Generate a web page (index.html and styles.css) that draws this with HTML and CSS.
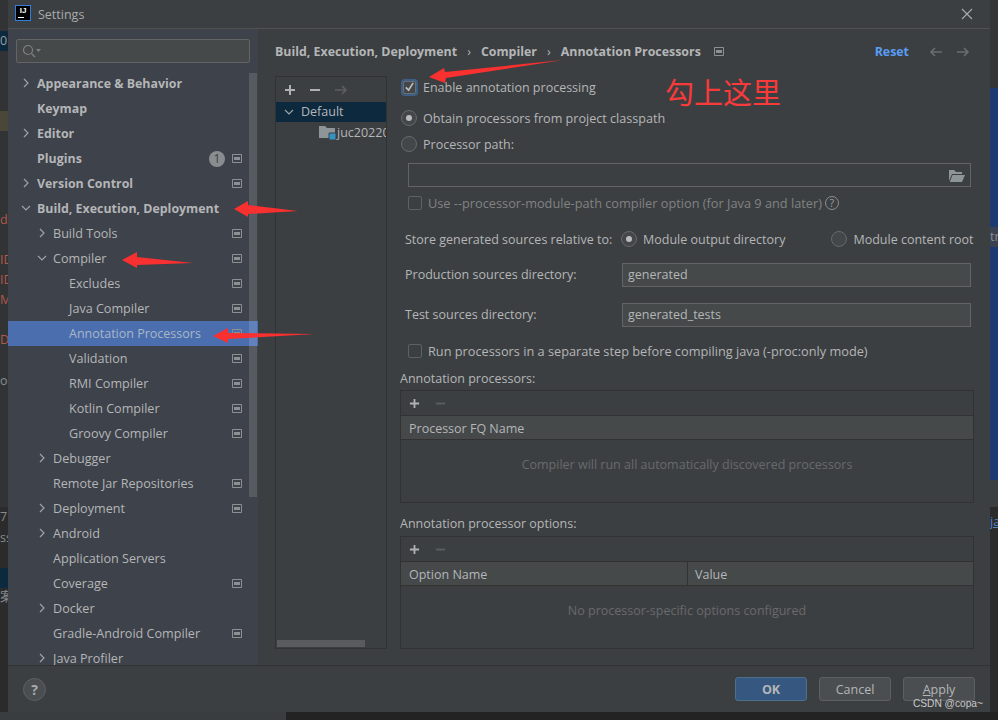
FILE: index.html
```html
<!DOCTYPE html>
<html lang="en">
<head>
    <meta charset="UTF-8">
    <title>Settings</title>
    <link rel="stylesheet" href="styles.css">
</head>
<body>
    <svg width="0" height="0" class="defs">
        <symbol id="right" viewBox="0 0 10 10"><path d="M3 1l4 4-4 4" fill="none" stroke="#a0a3a6" stroke-width="1.2"/></symbol>
        <symbol id="down" viewBox="0 0 10 10"><path d="M1 3l4 4 4-4" fill="none" stroke="#a0a3a6" stroke-width="1.2"/></symbol>
        <symbol id="proj" viewBox="0 0 10 9"><path d="M.5.5h9v8h-9z" fill="none" stroke="#8c9094"/><path d="M2 3h6v3H2z" fill="#8c9094"/></symbol>
        <symbol id="plus" viewBox="0 0 12 12"><path d="M6 1v10M1 6h10" fill="none" stroke="currentColor" stroke-width="2"/></symbol>
        <symbol id="minus" viewBox="0 0 12 12"><path d="M1 6h10" fill="none" stroke="currentColor" stroke-width="2"/></symbol>
        <symbol id="arrowr" viewBox="0 0 14 12"><path d="M1 6h11M8 2l4 4-4 4" fill="none" stroke="currentColor" stroke-width="1.6"/></symbol>
        <symbol id="arrowl" viewBox="0 0 14 12"><path d="M13 6H2M6 2L2 6l4 4" fill="none" stroke="currentColor" stroke-width="1.6"/></symbol>
    </svg>

    <div class="backdrop">
        <div class="bd bd-left"></div>
        <div class="bd bd-foot"></div>
        <div class="bd bd-foot2"></div>
        <div class="bd bd-blue1">0</div>
        <div class="bd bd-olive"></div>
        <div class="bd bd-red r1">d</div>
        <div class="bd bd-red r2">ID</div>
        <div class="bd bd-red r3">ID</div>
        <div class="bd bd-red r4">M</div>
        <div class="bd bd-red r5">D</div>
        <div class="bd bd-gray g1">o</div>
        <div class="bd bd-gray g2">7</div>
        <div class="bd bd-gray g3">ss</div>
        <div class="bd bd-blue2"></div>
        <div class="bd bd-gray g4">案</div>
        <div class="bd bd-top"></div>
        <div class="bd bd-sel"></div>
        <div class="bd bd-tr">tr</div>
        <div class="bd bd-mid"></div>
        <div class="bd bd-a">ja</div>
    </div>

    <div class="dialog">
        <div class="titlebar">
            <span class="ij"><span>IJ</span></span>
            <span class="title">Settings</span>
            <svg class="close" width="12" height="12" viewBox="0 0 12 12"><path d="M1 1l10 10M11 1L1 11" stroke="#a9abad" stroke-width="1.1" fill="none"/></svg>
        </div>
        <div class="content">
            <div class="side">
                <div class="search">
                    <svg width="20" height="14" viewBox="0 0 20 14"><circle cx="6" cy="6" r="4.5" fill="none" stroke="#7f8285" stroke-width="1.2"/><path d="M9.5 9.5l3.5 3.5" stroke="#7f8285" stroke-width="1.2"/><path d="M14 5h5l-2.500 3z" fill="#7f8285"/></svg>
                </div>
                <ul class="tree">
                    <li class="row l0 b"><svg class="chev"><use href="#right"/></svg>Appearance &amp; Behavior</li>
                    <li class="row l0 b">Keymap</li>
                    <li class="row l0 b"><svg class="chev"><use href="#right"/></svg>Editor</li>
                    <li class="row l0 b">Plugins<span class="badge">1</span><svg class="pi"><use href="#proj"/></svg></li>
                    <li class="row l0 b"><svg class="chev"><use href="#right"/></svg>Version Control<svg class="pi"><use href="#proj"/></svg></li>
                    <li class="row l0 b"><svg class="chev"><use href="#down"/></svg>Build, Execution, Deployment</li>
                    <li class="row l1"><svg class="chev"><use href="#right"/></svg>Build Tools<svg class="pi"><use href="#proj"/></svg></li>
                    <li class="row l1"><svg class="chev"><use href="#down"/></svg>Compiler<svg class="pi"><use href="#proj"/></svg></li>
                    <li class="row l2">Excludes<svg class="pi"><use href="#proj"/></svg></li>
                    <li class="row l2">Java Compiler<svg class="pi"><use href="#proj"/></svg></li>
                    <li class="row l2 sel">Annotation Processors<svg class="pi"><use href="#proj"/></svg></li>
                    <li class="row l2">Validation<svg class="pi"><use href="#proj"/></svg></li>
                    <li class="row l2">RMI Compiler<svg class="pi"><use href="#proj"/></svg></li>
                    <li class="row l2">Kotlin Compiler<svg class="pi"><use href="#proj"/></svg></li>
                    <li class="row l2">Groovy Compiler<svg class="pi"><use href="#proj"/></svg></li>
                    <li class="row l1"><svg class="chev"><use href="#right"/></svg>Debugger</li>
                    <li class="row l1">Remote Jar Repositories<svg class="pi"><use href="#proj"/></svg></li>
                    <li class="row l1"><svg class="chev"><use href="#right"/></svg>Deployment<svg class="pi"><use href="#proj"/></svg></li>
                    <li class="row l1"><svg class="chev"><use href="#right"/></svg>Android</li>
                    <li class="row l1">Application Servers</li>
                    <li class="row l1">Coverage<svg class="pi"><use href="#proj"/></svg></li>
                    <li class="row l1"><svg class="chev"><use href="#right"/></svg>Docker</li>
                    <li class="row l1">Gradle-Android Compiler<svg class="pi"><use href="#proj"/></svg></li>
                    <li class="row l1"><svg class="chev"><use href="#right"/></svg>Java Profiler</li>
                </ul>
                <div class="scroll"></div>
            </div>
            <div class="main">
                <div class="crumbs">
                    <span>Build, Execution, Deployment</span><i>›</i>
                    <span>Compiler</span><i>›</i>
                    <span>Annotation Processors</span>
                    <svg class="crumb-icon"><use href="#proj"/></svg>
                    <a class="reset">Reset</a>
                    <svg class="nav"><use href="#arrowl"/></svg>
                    <svg class="nav"><use href="#arrowr"/></svg>
                </div>
                <div class="panes">
                    <div class="profiles">
                        <div class="tools">
                            <svg class="t on"><use href="#plus"/></svg>
                            <svg class="t on"><use href="#minus"/></svg>
                            <svg class="t off"><use href="#arrowr"/></svg>
                        </div>
                        <div class="prof-sel"><svg class="chev"><use href="#down"/></svg>Default</div>
                        <div class="prof-mod">
                            <svg class="folder" width="18" height="15" viewBox="0 0 18 15"><path d="M0 1h6l2 2h8v10H0z" fill="#8e9599"/><path d="M10 8h7v7h-7z" fill="#3592c4" stroke="#3c3f41"/></svg>
                            <span>juc20220</span>
                        </div>
                        <div class="prof-scroll"></div>
                    </div>
                    <div class="form">
                        <label class="line first"><span class="check on"><svg width="12" height="12" viewBox="0 0 12 12"><path d="M2 6.500l3 3 5-8" fill="none" stroke="#bcbec0" stroke-width="1.800"/></svg></span>Enable annotation processing</label>
                        <label class="line l-obtain"><span class="radio on"></span>Obtain processors from project classpath</label>
                        <label class="line l-path"><span class="radio"></span>Processor path:</label>
                        <div class="path-box">
                            <svg width="16" height="13" viewBox="0 0 16 13"><path d="M0 1h5l2 2h6v2H3L0 12z" fill="#8e9599"/><path d="M3.500 6H16l-3 7H.8z" fill="#8e9599"/></svg>
                        </div>
                        <label class="line l-use dim"><span class="check off"></span>Use --processor-module-path compiler option (for Java 9 and later)<span class="help">?</span></label>
                        <div class="line l-store">
                            <span class="lbl">Store generated sources relative to:</span>
                            <span class="radio on"></span><span>Module output directory</span>
                            <span class="radio r-root"></span><span>Module content root</span>
                        </div>
                        <div class="field f-prod"><span class="lbl">Production sources directory:</span><span class="input">generated</span></div>
                        <div class="field f-test"><span class="lbl">Test sources directory:</span><span class="input">generated_tests</span></div>
                        <label class="line l-run"><span class="check off"></span>Run processors in a separate step before compiling java (-proc:only mode)</label>
                        <div class="cap cap1">Annotation processors:</div>
                        <div class="table">
                            <div class="ttools"><svg class="t2 on"><use href="#plus"/></svg><svg class="t2 off"><use href="#minus"/></svg></div>
                            <div class="thead"><span>Processor FQ Name</span></div>
                            <div class="tempty">Compiler will run all automatically discovered processors</div>
                        </div>
                        <div class="cap cap2">Annotation processor options:</div>
                        <div class="table">
                            <div class="ttools"><svg class="t2 on"><use href="#plus"/></svg><svg class="t2 off"><use href="#minus"/></svg></div>
                            <div class="thead"><span class="col1">Option Name</span><span class="col2">Value</span></div>
                            <div class="tempty">No processor-specific options configured</div>
                        </div>
                    </div>
                </div>
            </div>
        </div>
        <div class="footer">
            <span class="help-btn">?</span>
            <span class="btn ok">OK</span>
            <span class="btn">Cancel</span>
            <span class="btn"><u>A</u>pply</span>
        </div>
    </div>

    <svg class="marks" width="998" height="720" viewBox="0 0 998 720">
        <path d="M429 77l15-9 1 4 118-12-117 18-1 5z" fill="#f83030"/>
        <path d="M234 209l14-8v4l50 6-50 3v3z" fill="#f83030"/>
        <path d="M122 260l15-8v5l56 6-56 2v3z" fill="#f83030"/>
        <path d="M213 336l15-8v5l87 1-87 5v4z" fill="#f83030"/>
    </svg>
    <div class="note">勾上这里</div>
    <div class="watermark">CSDN @copa~</div>
</body>
</html>
```

FILE: styles.css
```css
*{
    box-sizing: border-box;
}
html, body{
    margin: 0;
    height: 720px;
    overflow: hidden;
}
body{
    position: relative;
    background-color: #2b2b2b;
    font-family: "Open Sans", "Noto Sans", sans-serif;
    font-size: 12.5px;
    color: #b4b6b8;
}
.defs{
    position: absolute;
}

/* the IDE behind the dialog */
.backdrop{
    position: absolute;
    inset: 0;
}
.bd{
    position: absolute;
    left: 0;
    line-height: 20px;
}
.bd-left{
    top: 0;
    width: 8px;
    height: 507px;
    background-color: #313335;
}
.bd-foot{
    top: 712px;
    width: 286px;
    height: 8px;
    background-color: #3a3d3f;
}
.bd-foot2{
    left: 286px;
    top: 712px;
    width: 712px;
    height: 8px;
    background-color: #232323;
}
.bd-blue1{
    top: 31px;
    width: 8px;
    height: 20px;
    background-color: #0d293e;
    color: #9a9c9e;
}
.bd-olive{
    top: 111px;
    width: 8px;
    height: 20px;
    background-color: #4a4738;
}
.bd-red{
    color: #b0584a;
}
.r1{ top: 210px; }
.r2{ top: 250px; }
.r3{ top: 270px; }
.r4{ top: 290px; }
.r5{ top: 330px; }
.bd-gray{
    color: #8a8c8e;
}
.g1{ top: 371px; }
.g2{ top: 507px; }
.g3{ top: 528px; }
.g4{ top: 587px; }
.bd-blue2{
    top: 568px;
    width: 8px;
    height: 20px;
    background-color: #0d293e;
}
.bd-top{
    left: 990px;
    top: 0;
    width: 8px;
    height: 88px;
    background-color: #333537;
}
.bd-sel{
    left: 990px;
    top: 88px;
    width: 8px;
    height: 392px;
    background-color: #1e3a74;
}
.bd-tr{
    left: 990px;
    top: 227px;
    width: 8px;
    background-color: #3a4150;
    color: #8a8c8e;
    overflow: hidden;
}
.bd-mid{
    left: 990px;
    top: 480px;
    width: 8px;
    height: 27px;
    background-color: #3c3f41;
}
.bd-a{
    left: 990px;
    top: 512px;
    color: #4f86c6;
    width: 8px;
    overflow: hidden;
    text-decoration: underline;
}

.dialog{
    position: relative;
    margin-left: 8px;
    width: 982px;
    height: 712px;
    background-color: #3c3f41;
    display: flex;
    flex-direction: column;
}
.titlebar{
    height: 29px;
    flex: none;
    display: flex;
    align-items: center;
    border-bottom: 1px solid #515151;
    padding-left: 7px;
    padding-right: 17px;
}
.ij{
    width: 16px;
    height: 16px;
    background-color: #000;
    border: 1px solid #2f7fe0;
    color: #fff;
    font-family: "Liberation Sans", sans-serif;
    font-size: 8px;
    font-weight: 700;
    line-height: 9px;
    text-align: center;
    position: relative;
    top: -1px;
}
.ij span{
    display: block;
}
.ij::after{
    content: "";
    position: absolute;
    left: 2px;
    bottom: 2px;
    width: 6px;
    height: 1px;
    background-color: #fff;
}
.title{
    margin-left: 7px;
    color: #a9abad;
}
.close{
    margin-left: auto;
}
.content{
    height: 636px;
    flex: none;
    display: flex;
}

/* sidebar */
.side{
    width: 250px;
    flex: none;
    background-color: #3e424a;
    padding: 10px 8px 0 8px;
    position: relative;
    overflow: hidden;
    font-size: 12.6px;
}
.search{
    height: 24px;
    background-color: #45494a;
    border: 1px solid #646464;
    border-radius: 2px;
    padding: 4px 5px;
    width: 234px;
    display: flex;
}
.scroll{
    position: absolute;
    right: 1px;
    top: 44px;
    width: 8px;
    height: 424px;
    background-color: rgba(255, 255, 255, 0.13);
}
.tree{
    list-style: none;
    margin: 8px -8px 0;
    padding: 0;
    position: relative;
}
.row{
    height: 25px;
    line-height: 25px;
    position: relative;
    white-space: nowrap;
}
.b{
    font-weight: 700;
    font-size: 12.4px;
}
.l0{ padding-left: 29px; }
.l1{ padding-left: 45px; }
.l2{ padding-left: 61px; }
.sel{
    background-color: #4b6eaf;
    color: #a9b7c6;
    font-size: 12.5px;
}
.chev{
    position: absolute;
    width: 10px;
    height: 10px;
    top: 7px;
}
.l0 .chev{ left: 13px; }
.l1 .chev{ left: 29px; }
.pi{
    position: absolute;
    left: 224px;
    top: 8px;
    width: 10px;
    height: 9px;
}
.badge{
    position: absolute;
    left: 201px;
    top: 5px;
    width: 16px;
    height: 16px;
    border-radius: 50%;
    background-color: #8a8d90;
    color: #3c3f41;
    font-size: 12px;
    line-height: 16px;
    text-align: center;
    font-weight: 400;
}

/* right side */
.main{
    flex: 1;
    min-width: 0;
}
.crumbs{
    height: 45px;
    margin-bottom: 2px;
    display: flex;
    align-items: center;
    padding-left: 17px;
    font-size: 12.4px;
    font-weight: 700;
    white-space: nowrap;
}
.crumbs i{
    font-style: normal;
    font-weight: 400;
    margin: 0 10px;
}
.crumb-icon{
    width: 10px;
    height: 9px;
    margin-left: 13px;
}
.reset{
    margin-left: auto;
    margin-right: 7px;
    color: #589df6;
}
.nav{
    width: 14px;
    height: 12px;
    color: #6a6d70;
    margin-left: 13px;
}
.nav:last-child{
    margin-right: 20px;
}
.panes{
    display: flex;
    padding-left: 17px;
}
.profiles{
    width: 112px;
    height: 573px;
    flex: none;
    border: 1px solid #323232;
    position: relative;
}
.tools{
    height: 25px;
    display: flex;
    align-items: center;
    padding-left: 8px;
    gap: 13px;
}
.t{
    width: 12px;
    height: 12px;
}
.t.off{
    width: 14px;
}
.on{
    color: #afb1b3;
}
.off{
    color: #5c5f61;
}
.prof-sel{
    height: 20px;
    background-color: #0d293e;
    line-height: 19px;
    padding-left: 25px;
    position: relative;
}
.prof-sel .chev{
    left: 8px;
    top: 5px;
}
.prof-mod{
    height: 20px;
    display: flex;
    align-items: center;
    padding-left: 43px;
    overflow: hidden;
    white-space: nowrap;
}
.folder{
    flex: none;
}
.prof-scroll{
    position: absolute;
    left: 1px;
    bottom: 1px;
    width: 88px;
    height: 7px;
    background-color: #595b5d;
}

.form{
    width: 574px;
    margin-left: 13px;
    flex: none;
}
.line{
    height: 22px;
    display: flex;
    align-items: center;
    white-space: nowrap;
}
.first{ margin-top: 0; }
.l-obtain{ margin-top: 9px; font-size: 12.6px; }
.l-path{ margin-top: 4px; }
.l-use{ margin-top: 5px; padding-left: 8px; font-size: 12.75px; }
.l-store{ margin-top: 14px; padding-left: 5px; }
.l-run{ margin-top: 13px; padding-left: 8px; font-size: 12.75px; }
.dim{
    color: #808284;
}
.check{
    width: 14px;
    height: 14px;
    border: 1px solid #5e6163;
    border-radius: 2px;
    margin-right: 6px;
    flex: none;
    display: flex;
    align-items: center;
    justify-content: center;
    background-color: #43474a;
}
.check.on{
    width: 13px;
    height: 13px;
    margin: 0 7px 0 3px;
    background-color: #43474a;
    border-color: #6b6e70;
    box-shadow: 0 0 0 2px #3d5f86;
}
.check.off{
    background-color: transparent;
}
.radio{
    width: 16px;
    height: 16px;
    border-radius: 50%;
    border: 1px solid #666a6c;
    background-color: #43474a;
    margin-right: 6px;
    margin-left: 1px;
    flex: none;
    position: relative;
}
.radio.on::after{
    content: "";
    position: absolute;
    left: 4px;
    top: 4px;
    width: 6px;
    height: 6px;
    border-radius: 50%;
    background-color: #bbb;
}
.path-box{
    margin: 8px 3px 0 8px;
    height: 24px;
    border: 1px solid #646464;
    display: flex;
    align-items: center;
    justify-content: flex-end;
    padding-right: 5px;
}
.help{
    width: 14px;
    height: 14px;
    border: 1px solid #8c8e90;
    border-radius: 50%;
    margin-left: 3px;
    font-size: 10px;
    line-height: 12px;
    text-align: center;
    color: #a0a2a4;
}
.lbl{
    flex: none;
}
.l-store .lbl{
    width: 215px;
}
.r-root{
    margin-left: 46px;
}
.field{
    height: 24px;
    display: flex;
    align-items: center;
    padding-left: 5px;
}
.f-prod{ margin-top: 13px; }
.f-test{ margin-top: 16px; }
.field .lbl{
    width: 217px;
}
.field span{
    position: relative;
    top: -1px;
}
.field .input{
    top: 0;
    width: 349px;
    height: 24px;
    border: 1px solid #646464;
    background-color: #45494a;
    padding-left: 5px;
    line-height: 21px;
}
.cap{
    height: 20px;
    line-height: 20px;
}
.cap1{ margin-top: 7px; margin-bottom: 1px; }
.cap2{ margin-top: 11px; margin-bottom: 2px; }
.table{
    height: 113px;
    border: 1px solid #323232;
}
.ttools{
    height: 24px;
    display: flex;
    align-items: center;
    padding-left: 8px;
    gap: 15px;
}
.t2{
    width: 11px;
    height: 11px;
}
.thead{
    height: 25px;
    background-color: #45494a;
    border-top: 1px solid #323232;
    border-bottom: 1px solid #323232;
    line-height: 25px;
    padding-left: 8px;
    display: flex;
}
.col1{
    width: 279px;
    border-right: 1px solid #323232;
}
.col2{
    padding-left: 7px;
}
.tempty{
    height: 62px;
    line-height: 50px;
    text-align: center;
    color: #686a6c;
}

.footer{
    height: 47px;
    flex: none;
    border-top: 1px solid #323232;
    display: flex;
    align-items: center;
    padding: 0 15px;
    gap: 12px;
}
.help-btn{
    width: 23px;
    height: 23px;
    border-radius: 50%;
    border: 1px solid #5e6163;
    background-color: #4b4e50;
    font-weight: 700;
    font-size: 14px;
    line-height: 21px;
    text-align: center;
    color: #a9abad;
    margin-right: auto;
}
.btn{
    width: 72px;
    height: 24px;
    line-height: 23px;
    border: 1px solid #5e6060;
    border-radius: 3px;
    background-color: #4b4e50;
    text-align: center;
}
.ok{
    background-color: #365880;
    border-color: #4c708c;
    font-weight: 700;
}

/* drawn on the screenshot afterwards */
.marks{
    position: absolute;
    left: 0;
    top: 0;
    pointer-events: none;
}
.note{
    position: absolute;
    left: 665px;
    top: 72px;
    font-family: "Noto Sans CJK SC", sans-serif;
    font-size: 29px;
    line-height: 38px;
    color: #f83a3a;
}
.watermark{
    position: absolute;
    right: 15px;
    top: 697px;
    font-family: "Liberation Sans", sans-serif;
    font-size: 10.2px;
    line-height: 14px;
    color: #c8c8c8;
}
```
